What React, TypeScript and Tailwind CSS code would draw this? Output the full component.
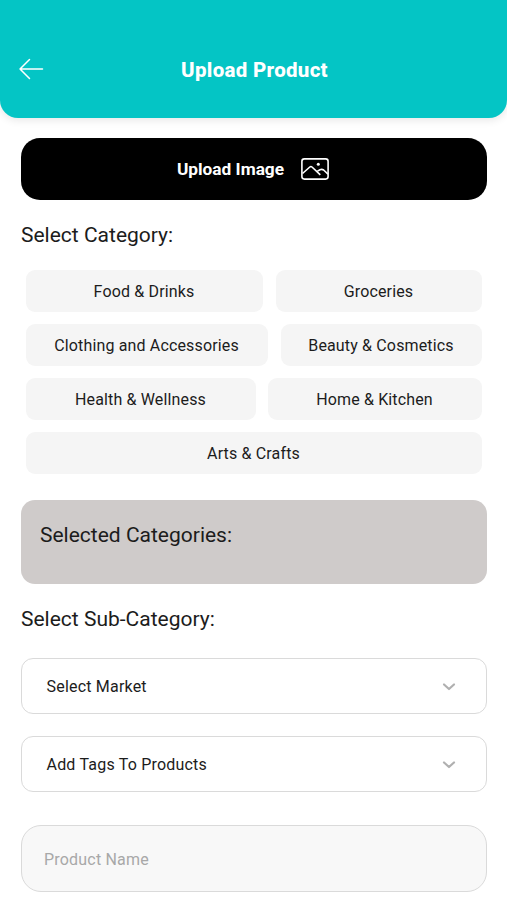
const categoryRows = [
  [
    { label: "Food & Drinks", width: "w-[237px]" },
    { label: "Groceries", width: "w-[206px]" },
  ],
  [
    { label: "Clothing and Accessories", width: "w-[242px]" },
    { label: "Beauty & Cosmetics", width: "w-[201px]" },
  ],
  [
    { label: "Health & Wellness", width: "w-[230px]" },
    { label: "Home & Kitchen", width: "w-[214px]" },
  ],
  [{ label: "Arts & Crafts", width: "w-full" }],
];

const BackArrow = () => (
  <svg width="26" height="22" viewBox="0 0 26 22" fill="none" stroke="currentColor" strokeWidth="1.5" strokeLinecap="round" strokeLinejoin="round">
    <path d="M24.500 11H2M11.500 1.500 2 11l9.500 9.500" />
  </svg>
);

const ImageIcon = () => (
  <svg width="28" height="22" viewBox="0 0 28 22" fill="none" stroke="currentColor" strokeWidth="1.600" strokeLinejoin="round">
    <rect x="0.900" y="0.900" width="26.200" height="20.200" rx="2.500" />
    <path d="M1.500 15.500 8.800 9Q9.900 8.100 11 9L19.300 16.800M15.700 13.600 19 11.800Q20.800 10.800 22.600 12L27 16.200" />
    <circle cx="17.300" cy="6.300" r="1.500" fill="currentColor" stroke="none" />
  </svg>
);

const Chevron = () => (
  <svg width="14" height="10" viewBox="0 0 14 10" fill="none" stroke="currentColor" strokeWidth="2.200" strokeLinecap="round" strokeLinejoin="round">
    <path d="M2 2.500 7 7l5-4.500" />
  </svg>
);

const SelectField = ({ label }: { label: string }) => (
  <button className="flex h-14 w-full items-center justify-between rounded-[12px] border-[1.5px] border-[#dadada] bg-white pt-px pr-[30px] pl-[24.5px] text-[16px] tracking-[0.2px] text-[#1c1c1c]">
    <span>{label}</span>
    <span className="text-[#b0b0b0]">
      <Chevron />
    </span>
  </button>
);

const App = () => {
  return (
    <div className="h-[900px] w-[507px] overflow-hidden bg-white font-['Roboto',sans-serif] text-[#1c1c1c]">
      <header className="flex h-[118px] items-center rounded-b-[18px] bg-[#04c5c5] px-[18px] pt-[21px] text-white shadow-[0_2px_8px_rgba(0,0,0,0.1)]">
        <button className="w-[26px] pb-[2px]" aria-label="Back">
          <BackArrow />
        </button>
        <h1 className="flex-1 pt-[2px] pr-[24px] text-center text-[20.5px] font-extrabold tracking-[0.3px]">Upload Product</h1>
      </header>

      <main className="px-[21px] pt-5">
        <button className="flex h-[62px] w-[466px] items-center justify-center gap-[17px] rounded-[19px] bg-black pr-[2px] text-[17.3px] font-bold text-white">
          <span className="pt-[2px]">Upload Image</span>
          <ImageIcon />
        </button>

        <h2 className="mt-[21px] text-[21px] leading-7">Select Category:</h2>

        {/* Categories */}
        <div className="mt-[21px] ml-[5px] flex w-[456px] flex-col gap-3">
          {categoryRows.map((row) => (
            <div key={row[0].label} className="flex justify-between">
              {row.map((category) => (
                <button
                  key={category.label}
                  className={`${category.width} h-[42px] rounded-[9px] bg-[#f5f5f5] pt-[2px] pr-px text-[16px] tracking-[0.15px]`}
                >
                  {category.label}
                </button>
              ))}
            </div>
          ))}
        </div>

        <section className="mt-[26px] h-[84px] w-[466px] rounded-[14px] bg-[#cfcbca] px-[19px] pt-[21px]">
          <h2 className="text-[21px] leading-7">Selected Categories:</h2>
        </section>

        <h2 className="mt-[21px] text-[21px] leading-7">Select Sub-Category:</h2>

        <div className="mt-[25px] flex w-[466px] flex-col gap-[22px]">
          <SelectField label="Select Market" />
          <SelectField label="Add Tags To Products" />
        </div>

        <input
          className="mt-[33px] h-[67px] w-[466px] rounded-[20px] border-[1.5px] border-[#dadada] bg-[#f8f8f8] px-[22px] pt-[2px] text-[16px] tracking-[0.2px] placeholder:text-[#a8a8a8]"
          placeholder="Product Name"
        />
      </main>
    </div>
  );
};

export default App;
